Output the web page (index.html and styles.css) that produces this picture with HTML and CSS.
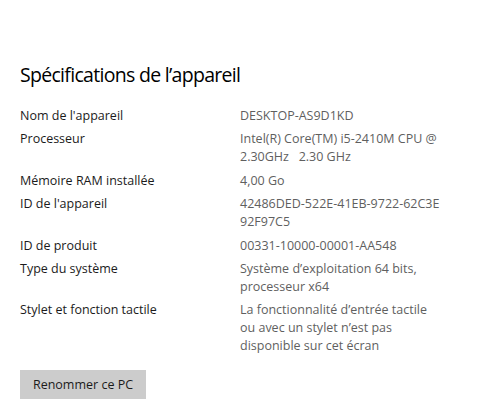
FILE: index.html
```html
<!DOCTYPE html>
<html lang="fr">
<head>
<meta charset="utf-8">
<link rel="stylesheet" href="styles.css">
</head>
<body>
<main class="page">
  <h1 class="title">Spécifications de l’appareil</h1>
  <dl class="specs">
    <dt>Nom de l'appareil</dt><dd>DESKTOP-AS9D1KD</dd>
    <dt>Processeur</dt><dd>Intel(R) Core(TM) i5-2410M CPU @<br>2.30GHz&nbsp;&nbsp;&nbsp;2.30 GHz</dd>
    <dt>Mémoire RAM installée</dt><dd>4,00 Go</dd>
    <dt>ID de l'appareil</dt><dd>42486DED-522E-41EB-9722-62C3E<br>92F97C5</dd>
    <dt>ID de produit</dt><dd>00331-10000-00001-AA548</dd>
    <dt>Type du système</dt><dd>Système d’exploitation 64 bits,<br>processeur x64</dd>
    <dt>Stylet et fonction tactile</dt><dd>La fonctionnalité d’entrée tactile<br>ou avec un stylet n’est pas<br>disponible sur cet écran</dd>
  </dl>
  <button class="rename">Renommer ce PC</button>
</main>
</body>
</html>
```
FILE: styles.css
```css
html, body {
  margin: 0;
  padding: 0;
  background: #ffffff;
}
.page {
  padding: 61px 20px 0 20px;
  font-family: "Open Sans", "Noto Sans", sans-serif;
}
.title {
  margin: 0 0 18px 0;
  font-size: 19.5px;
  letter-spacing: -0.7px;
  font-weight: 400;
  color: #000;
  line-height: 28px;
}
.specs {
  display: grid;
  grid-template-columns: 220px 1fr;
  row-gap: 5.4px;
  margin: 0;
  font-size: 12.5px;
  line-height: 18px;
}
.specs dt {
  color: #1b1b1b;
}
.specs dd {
  margin: 0;
  color: #5f5f5f;
}
.rename {
  display: block;
  margin-top: 15px;
  width: 126px;
  height: 29px;
  border: none;
  background: #cccccc;
  color: #1b1b1b;
  font-family: "Open Sans", "Noto Sans", sans-serif;
  font-size: 12.5px;
  padding: 0;
}
```
